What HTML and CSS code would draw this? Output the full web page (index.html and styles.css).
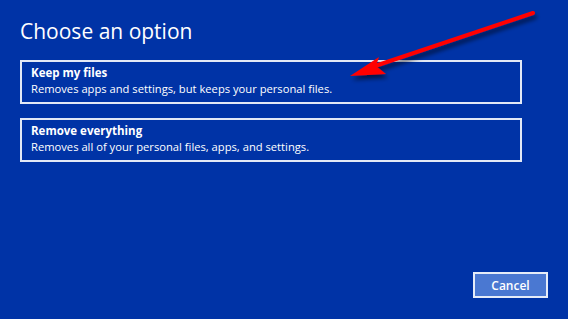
FILE: index.html
```html
<!DOCTYPE html>
<html lang="en">
<head>
  <meta charset="UTF-8">
  <meta name="viewport" content="width=device-width, initial-scale=1.0">
  <title>Choose an option</title>
  <link rel="stylesheet" href="styles.css">
</head>
<body>
  <div class="screen">
    <h1>Choose an option</h1>

    <div class="options">
      <button class="option">
        <span class="option-title">Keep my files</span>
        <span class="option-desc">Removes apps and settings, but keeps your personal files.</span>
      </button>

      <button class="option">
        <span class="option-title">Remove everything</span>
        <span class="option-desc">Removes all of your personal files, apps, and settings.</span>
      </button>
    </div>

    <div class="footer">
      <button class="cancel">Cancel</button>
    </div>
  </div>

  <!-- annotation arrow drawn over the screenshot -->
  <svg class="arrow" width="568" height="319" viewBox="0 0 568 319">
    <defs>
      <filter id="shadow" x="-20%" y="-20%" width="140%" height="160%">
        <feGaussianBlur in="SourceAlpha" stdDeviation="2"/>
        <feOffset dx="2" dy="4"/>
        <feComponentTransfer><feFuncA type="linear" slope="0.55"/></feComponentTransfer>
        <feMerge><feMergeNode/><feMergeNode in="SourceGraphic"/></feMerge>
      </filter>
    </defs>
    <g filter="url(#shadow)" fill="#ff0000">
      <line x1="533" y1="13" x2="372" y2="67" stroke="#ff0000" stroke-width="4" stroke-linecap="round"/>
      <path d="M350 76 L379 57 L376 66 L386 74 Z"/>
    </g>
  </svg>
</body>
</html>
```

FILE: styles.css
```css
html, body {
  margin: 0;
  height: 100%;
}

body {
  background-color: #0033a6;
  font-family: 'Open Sans', 'Noto Sans', sans-serif;
  color: #ffffff;
  overflow: hidden;
  position: relative;
}

.screen {
  height: 100%;
  box-sizing: border-box;
  padding: 16px 20px 21px 20px;
  display: flex;
  flex-direction: column;
}

h1 {
  margin: 0 0 14px 0;
  font-size: 21px;
  font-weight: 400;
  line-height: 30px;
}

.options {
  display: flex;
  flex-direction: column;
  gap: 14px;
  width: 502px;
}

.option {
  display: flex;
  flex-direction: column;
  align-items: flex-start;
  height: 44px;
  box-sizing: border-box;
  padding: 3px 9px 0 9px;
  background: transparent;
  border: 2px solid #e3e9f6;
  color: #ffffff;
  font-family: inherit;
  text-align: left;
  cursor: pointer;
}

.option-title {
  font-size: 11.5px;
  font-weight: 700;
  line-height: 16px;
}

.option-desc {
  font-size: 11.2px;
  line-height: 16px;
}

.footer {
  margin-top: auto;
  display: flex;
  justify-content: flex-end;
}

.cancel {
  width: 75px;
  height: 26px;
  background-color: #4a78d2;
  border: 2px solid #e6ecf8;
  color: #ffffff;
  font-family: inherit;
  font-size: 12px;
  font-weight: 600;
  cursor: pointer;
}

.arrow {
  position: absolute;
  top: 0;
  left: 0;
  pointer-events: none;
}
```
